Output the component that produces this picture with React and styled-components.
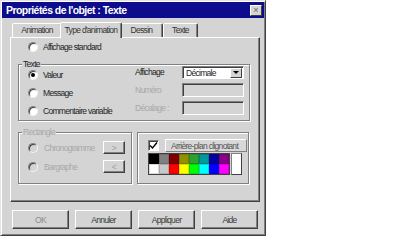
import React from 'react';
import styled, { createGlobalStyle } from 'styled-components';

const FACE = '#d4d4d4';

const GlobalStyle = createGlobalStyle`
  html, body { margin: 0; padding: 0; background: #fff; }
  body {
    font-family: "Liberation Sans", Arial, sans-serif;
    font-size: 8.5px;
    letter-spacing: -0.7px;
    color: #1e1e1e;
    white-space: nowrap;
  }
  * { box-sizing: border-box; }
`;

const Dialog = styled.div`
  width: 266px;
  height: 236px;
  background: ${FACE};
  border: 1px solid;
  border-color: #e4e4e4 #404040 #404040 #e4e4e4;
  box-shadow: inset 1px 1px #fff, inset -1px -1px #808080;
  padding: 1px;
  display: flex;
  flex-direction: column;
`;

const TitleBar = styled.div`
  height: 16px;
  background: #0c0c8c;
  display: flex;
  align-items: center;
  justify-content: space-between;
  padding: 0 2px 0 4px;
  color: #fff;
  font-weight: bold;
  font-size: 10.5px;
  letter-spacing: -0.55px;
  line-height: 16px;
`;

const CloseButton = styled.div`
  width: 12px;
  height: 11px;
  background: ${FACE};
  border: 1px solid;
  border-color: #fff #404040 #404040 #fff;
  display: grid;
  place-items: center;
  color: #666;
  font-weight: normal;
  font-size: 9px;
  letter-spacing: 0;
  line-height: 1;
`;

const Body = styled.div`
  flex: 1;
  display: flex;
  flex-direction: column;
  padding: 4px 4px 0 8px;
`;

const TabStrip = styled.div`
  display: flex;
  align-items: flex-end;
  height: 15px;
  padding-left: 2px;
  position: relative;
  z-index: 1;
`;

const Tab = styled.div`
  width: ${p => p.$w}px;
  height: ${p => (p.$sel ? 16 : 14)}px;
  margin: ${p => (p.$sel ? '0 -2px -1px -2px' : '0')};
  position: relative;
  z-index: ${p => (p.$sel ? 2 : 1)};
  background: ${FACE};
  border: 1px solid;
  border-bottom: none;
  border-color: #fff #404040 transparent #fff;
  border-radius: 2px 2px 0 0;
  box-shadow: inset -1px 0 #808080;
  display: flex;
  justify-content: center;
  padding-top: ${p => (p.$sel ? 2 : 1)}px;
  color: #333;
  line-height: 10px;
`;

const Panel = styled.div`
  height: 165px;
  border: 1px solid;
  border-color: #fff #404040 #404040 #fff;
  box-shadow: inset -1px -1px #808080;
  padding: 4px 9px 0 7px;
  display: flex;
  flex-direction: column;
`;

const RadioRow = styled.div`
  display: flex;
  align-items: center;
  gap: ${p => p.$gap || 5}px;
  height: ${p => p.$h || 12}px;
  margin-left: ${p => p.$ml || 0}px;
  color: ${p => (p.$disabled ? '#a8a8a8' : '#1e1e1e')};
  line-height: 10px;
`;

const Radio = styled.span`
  width: 10px;
  height: 10px;
  flex: none;
  border-radius: 50%;
  background: ${p => (p.$disabled ? FACE : '#fff')};
  border: 1px solid;
  border-color: #808080 #f4f4f4 #f4f4f4 #808080;
  box-shadow: inset 1px 1px #404040;
  display: grid;
  place-items: center;
  &::after {
    content: '';
    width: 4px;
    height: 4px;
    border-radius: 50%;
    background: ${p => (p.$checked ? '#000' : 'transparent')};
  }
`;

const GroupBox = styled.div`
  position: relative;
  border: 1px solid #808080;
  box-shadow: inset 1px 1px #fff, 1px 1px #fff;
  margin-top: ${p => p.$mt || 0}px;
  height: ${p => p.$h}px;
  width: ${p => (p.$w ? `${p.$w}px` : 'auto')};
  flex: none;
`;

const GroupLabel = styled.span`
  position: absolute;
  top: -6px;
  left: 3px;
  padding: 0 1px;
  background: ${FACE};
  line-height: 10px;
  color: ${p => (p.$disabled ? '#a8a8a8' : '#1e1e1e')};
`;

const TexteContent = styled.div`
  display: flex;
  justify-content: space-between;
  padding: 0 5px 0 9px;
`;

const RadioColumn = styled.div`
  display: flex;
  flex-direction: column;
  gap: 6px;
  padding-top: 4px;
`;

const FieldGrid = styled.div`
  display: grid;
  grid-template-columns: 47px 62px;
  grid-auto-rows: 14px;
  row-gap: 4px;
  align-items: center;
`;

const FieldLabel = styled.span`
  color: ${p => (p.$disabled ? '#a8a8a8' : '#1e1e1e')};
  line-height: 10px;
`;

const Select = styled.div`
  height: 13px;
  background: #fff;
  border: 1px solid;
  border-color: #808080 #fff #fff #808080;
  box-shadow: inset 1px 1px #404040;
  display: flex;
  align-items: center;
  justify-content: space-between;
  padding: 1px 1px 0 3px;
  line-height: 10px;
`;

const DropButton = styled.span`
  width: 12px;
  height: 10px;
  background: ${FACE};
  border: 1px solid;
  border-color: #fff #404040 #404040 #fff;
  display: grid;
  place-items: center;
  &::after {
    content: '';
    border-left: 3px solid transparent;
    border-right: 3px solid transparent;
    border-top: 3px solid #000;
  }
`;

const Input = styled.div`
  height: 14px;
  background: ${FACE};
  border: 1px solid;
  border-color: #808080 #fff #fff #808080;
  box-shadow: inset 1px 1px #404040;
`;

const LowerRow = styled.div`
  display: flex;
  gap: 5px;
  margin-top: 11px;
`;

const RectContent = styled.div`
  display: flex;
  flex-direction: column;
  gap: 6px;
  padding: 8px 6px 0 9px;
`;

const RectRow = styled.div`
  display: flex;
  align-items: center;
  justify-content: space-between;
  height: 13px;
`;

const SmallButton = styled.div`
  width: 22px;
  height: 13px;
  background: ${FACE};
  border: 1px solid;
  border-color: #fff #404040 #404040 #fff;
  box-shadow: inset -1px -1px #808080;
  display: grid;
  place-items: center;
  color: #a0a0a0;
  line-height: 10px;
`;

const ColorContent = styled.div`
  display: flex;
  flex-direction: column;
  padding: 5px 1px 0 10px;
`;

const CheckRow = styled.div`
  display: flex;
  align-items: center;
  gap: 6px;
  height: 14px;
`;

const CheckBox = styled.span`
  width: 11px;
  height: 11px;
  flex: none;
  background: #fff;
  border: 1px solid;
  border-color: #808080 #fff #fff #808080;
  box-shadow: inset 1px 1px #404040;
  display: grid;
  place-items: center;
`;

const FlatLabel = styled.div`
  flex: 1;
  height: 13px;
  border: 1px solid;
  border-color: #fff #808080 #808080 #fff;
  background: #d8d8d8;
  color: #555;
  padding: 1px 0 0 5px;
  line-height: 10px;
`;

const Palette = styled.div`
  display: flex;
  margin-top: 1px;
`;

const Swatches = styled.div`
  display: grid;
  grid-template-columns: repeat(8, 10px);
  grid-auto-rows: 10px;
  border: 1px solid #404040;
  background: #404040;
`;

const Swatch = styled.span`
  background: ${p => p.$c};
  box-shadow: inset 0 0 0 1px rgba(0, 0, 0, 0.15);
`;

const WhiteSwatch = styled.span`
  width: 11px;
  height: 22px;
  margin-left: 1px;
  background: #fff;
  border: 1px solid;
  border-color: #808080 #404040 #404040 #808080;
`;

const ButtonRow = styled.div`
  display: flex;
  gap: 6px;
  margin-top: 8px;
  padding-left: 2px;
`;

const DialogButton = styled.div`
  width: 57px;
  height: 19px;
  background: ${FACE};
  border: 1px solid;
  border-color: #fff #404040 #404040 #fff;
  box-shadow: inset -1px -1px #808080;
  display: grid;
  place-items: center;
  color: ${p => (p.$dim ? '#8a8a8a' : '#3a3a3a')};
  line-height: 10px;
`;

const topColors = ['#000000', '#808080', '#800000', '#909000', '#30a030', '#009898', '#0000a0', '#880088'];
const bottomColors = ['#ffffff', '#c8c8c8', '#ff0000', '#ffff00', '#00ff00', '#00ffff', '#0000ff', '#ff00ff'];

export default function App() {
  return (
    <>
      <GlobalStyle />
      <Dialog>
        <TitleBar>
          <span>Propriétés de l'objet : Texte</span>
          <CloseButton>×</CloseButton>
        </TitleBar>
        <Body>
          <TabStrip>
            <Tab $w={50}>Animation</Tab>
            <Tab $w={62} $sel>Type d'animation</Tab>
            <Tab $w={43}>Dessin</Tab>
            <Tab $w={35}>Texte</Tab>
          </TabStrip>
          <Panel>
            <RadioRow $ml={10} $h={10}>
              <Radio />
              <span>Affichage standard</span>
            </RadioRow>
            <GroupBox $mt={12} $h={57}>
              <GroupLabel>Texte</GroupLabel>
              <TexteContent>
                <RadioColumn>
                  <RadioRow>
                    <Radio $checked />
                    <span>Valeur</span>
                  </RadioRow>
                  <RadioRow>
                    <Radio />
                    <span>Message</span>
                  </RadioRow>
                  <RadioRow>
                    <Radio />
                    <span>Commentaire variable</span>
                  </RadioRow>
                </RadioColumn>
                <FieldGrid>
                  <FieldLabel>Affichage</FieldLabel>
                  <Select>
                    <span>Décimale</span>
                    <DropButton />
                  </Select>
                  <FieldLabel $disabled>Numéro</FieldLabel>
                  <Input />
                  <FieldLabel $disabled>Décalage :</FieldLabel>
                  <Input />
                </FieldGrid>
              </TexteContent>
            </GroupBox>
            <LowerRow>
              <GroupBox $h={52} $w={114}>
                <GroupLabel $disabled>Rectangle</GroupLabel>
                <RectContent>
                  <RectRow>
                    <RadioRow $gap={6} $disabled>
                      <Radio $disabled />
                      <span>Chronogramme</span>
                    </RadioRow>
                    <SmallButton>&gt;</SmallButton>
                  </RectRow>
                  <RectRow>
                    <RadioRow $gap={6} $disabled>
                      <Radio $disabled />
                      <span>Bargraphe</span>
                    </RadioRow>
                    <SmallButton>&lt;</SmallButton>
                  </RectRow>
                </RectContent>
              </GroupBox>
              <GroupBox $h={52} $w={112}>
                <ColorContent>
                  <CheckRow>
                    <CheckBox>
                      <svg width="9" height="9" viewBox="0 0 9 9">
                        <polyline points="1,4.5 3.5,7 8,1.5" fill="none" stroke="#000" strokeWidth="1.4" />
                      </svg>
                    </CheckBox>
                    <FlatLabel>Arrière-plan clignotant</FlatLabel>
                  </CheckRow>
                  <Palette>
                    <Swatches>
                      {topColors.map((c, i) => (
                        <Swatch key={`t${i}`} $c={c} />
                      ))}
                      {bottomColors.map((c, i) => (
                        <Swatch key={`b${i}`} $c={c} />
                      ))}
                    </Swatches>
                    <WhiteSwatch />
                  </Palette>
                </ColorContent>
              </GroupBox>
            </LowerRow>
          </Panel>
          <ButtonRow>
            <DialogButton $dim>OK</DialogButton>
            <DialogButton>Annuler</DialogButton>
            <DialogButton>Appliquer</DialogButton>
            <DialogButton>Aide</DialogButton>
          </ButtonRow>
        </Body>
      </Dialog>
    </>
  );
}
